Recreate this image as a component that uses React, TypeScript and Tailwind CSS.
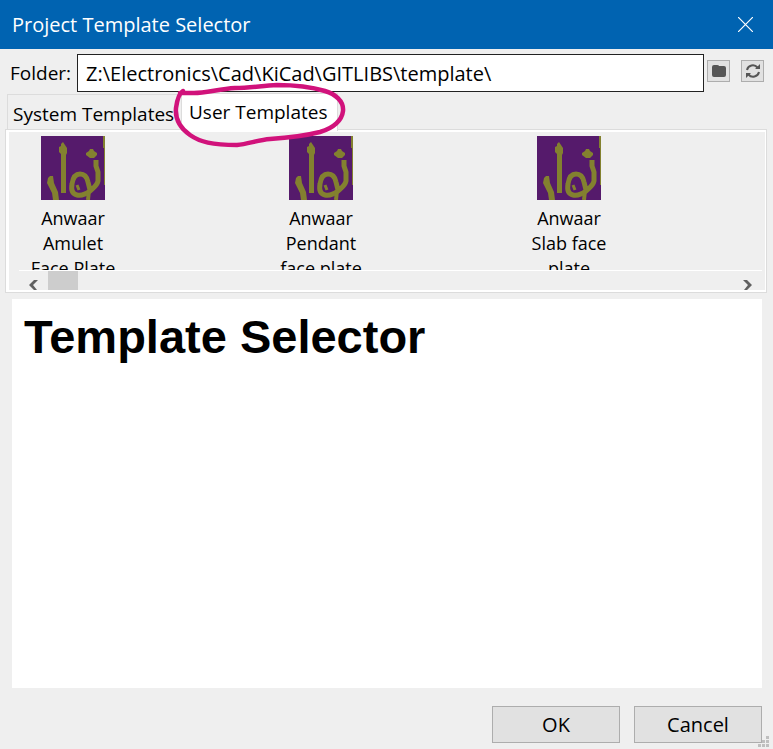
import React, { useState } from "react";

interface Template {
  id: string;
  name: string;
}

const templates: Template[] = [
  { id: "amulet", name: "Anwaar Amulet Face Plate" },
  { id: "pendant", name: "Anwaar Pendant face plate" },
  { id: "slab", name: "Anwaar Slab face plate" },
];

const TemplateIcon = () => (
  <svg width="64" height="64" viewBox="0 0 64 64" className="block shrink-0" aria-hidden="true">
    <rect width="64" height="64" fill="#551a6b" />
    <g fill="#83812f">
      <path d="M20 8 L22 6 L24 9 L26 12 V17 L25 19 V57 H20 V18 L18 16 V11 L20 10 Z" />
      <path d="M7 42 L9 40 H12 L13 47 L17 56 L18 64 H12 L11 57 L8 51 L6 47 Z" />
      <path d="M49 13 H52 L53 15 L56 17 V19 L53 22 H49 L45 19 V17 L48 15 Z" />
      <path d="M62 0 H64 V49 H63 V12 H62 Z" />
    </g>
    <g fill="none" stroke="#83812f" strokeWidth="5" strokeLinejoin="round">
      <path d="M55 24 V30 L57 36 V45 C56 50 52 52 49 55 C45 58 40 60 36 59 C31 58 30 54 31 48 C32 41 35 38 39 38 C44 38 46 41 47 46 L49 54" />
      <path d="M48 54 L47 64" strokeWidth="4" />
      <path d="M36 49 L38 54" strokeWidth="3" />
    </g>
  </svg>
);

const FolderIcon = () => (
  <svg width="14" height="12" viewBox="0 0 14 12" fill="#555" aria-hidden="true">
    <path d="M0 2 Q0 0 2 0 H5 Q7 0 7 1 H12 Q14 1 14 3 V10 Q14 12 12 12 H2 Q0 12 0 10 Z" />
  </svg>
);

const RefreshIcon = () => (
  <svg width="14" height="14" viewBox="0 0 14 14" aria-hidden="true">
    <g fill="none" stroke="#555" strokeWidth="2">
      <path d="M1 6 A6 6 0 0 1 11.5 3.5" />
      <path d="M13 8 A6 6 0 0 1 2.5 10.5" />
    </g>
    <path d="M14 0 V5 H9 Z M0 14 V9 H5 Z" fill="#555" />
  </svg>
);

// Hand-drawn ring around the user tab
const Highlight = () => (
  <svg
    width="180"
    height="72"
    viewBox="169 81 180 72"
    className="pointer-events-none absolute -left-3 -top-3 z-20"
    fill="none"
    stroke="#d1127b"
    strokeWidth="4.5"
    strokeLinecap="round"
    strokeLinejoin="round"
    aria-hidden="true"
  >
    <path d="M183 91 C179 93 177 101 176 108 C175 119 180 128 190 135 C200 142 212 145 237 145 C248 144 258 140 270 139 C285 138 300 137 320 132 C334 128 342 120 343 111 C344 101 335 94 325 91 C308 86 290 85 277 85 C260 86 250 88 235 88 C219 89 206 93 194 93 L180 93" />
  </svg>
);

const iconButton =
  "flex h-[22px] w-[23px] shrink-0 items-center justify-center border border-[#adadad] bg-[#e1e1e1]";
const dialogButton =
  "h-[37px] w-32 border border-[#adadad] bg-[#e1e1e1] text-center text-xl leading-6";

const App = () => {
  const [folder, setFolder] = useState("Z:\\Electronics\\Cad\\KiCad\\GITLIBS\\template\\");
  const [selected, setSelected] = useState("");

  return (
    <div className="flex min-h-screen flex-col bg-[#efefef] font-['Open_Sans','Noto_Sans',sans-serif] text-xl text-black">
      <header className="flex h-[49px] items-center justify-between bg-[#0063b1] pl-3 pr-5 text-white">
        <h1 className="text-xl">Project Template Selector</h1>
        <button type="button" aria-label="Close">
          <svg width="15" height="15" viewBox="0 0 15 15" stroke="#fff" strokeWidth="1.2" aria-hidden="true">
            <path d="M0 0 L15 15 M15 0 L0 15" />
          </svg>
        </button>
      </header>

      <div className="flex pl-[10px] pr-[9px] pt-[5px]">
        <label htmlFor="folder" className="w-[67px] shrink-0 self-center whitespace-nowrap text-[19px]">
          Folder:
        </label>
        <input
          id="folder"
          value={folder}
          onChange={(e) => setFolder(e.target.value)}
          className="h-[38px] min-w-0 flex-1 border border-[#222] bg-white px-2 outline-none"
        />
        <button type="button" aria-label="Browse" className={`${iconButton} ml-[3px] mt-[6px]`}>
          <FolderIcon />
        </button>
        <button type="button" aria-label="Refresh" className={`${iconButton} ml-[11px] mt-[6px]`}>
          <RefreshIcon />
        </button>
      </div>

      <div role="tablist" className="flex items-end pl-[7px] pt-[1px] text-[19px] leading-7">
        <button
          type="button"
          role="tab"
          aria-selected="false"
          className="h-[35px] w-[174px] whitespace-nowrap border-l border-t border-[#dcdcdc] pl-[5px] pt-1 text-left"
        >
          System Templates
        </button>
        <div className="relative z-10 -mb-[2px]">
          <button
            type="button"
            role="tab"
            aria-selected="true"
            className="block h-[38px] w-[157px] whitespace-nowrap border-x border-t border-[#dcdcdc] bg-white pb-[2px] pl-[7px] text-left"
          >
            User Templates
          </button>
          <Highlight />
        </div>
      </div>

      <section role="tabpanel" className="ml-[5px] mr-[6px] border border-[#dcdcdc]">
        <div className="border-y-2 border-l-[3px] border-r border-white">
          <ul className="flex h-[138px] gap-[152px] overflow-hidden pl-4 pt-1">
            {templates.map((template) => (
              <li key={template.id} className="w-24 shrink-0">
                <button
                  type="button"
                  aria-pressed={selected === template.id}
                  onClick={() => setSelected(template.id)}
                  className="flex w-full flex-col items-center gap-[6px] text-lg leading-[25px]"
                >
                  <TemplateIcon />
                  <span>{template.name}</span>
                </button>
              </li>
            ))}
          </ul>
          <div className="ml-[10px] mr-[3px] flex h-5 items-end border-t border-white">
            <button type="button" aria-label="Scroll left" className="ml-[10px]">
              <svg width="9" height="10" viewBox="0 0 9 10" className="block" fill="#606060" aria-hidden="true">
                <path d="M5 0 H9 L4 5 L8 10 H5 L0 5 Z" />
              </svg>
            </button>
            <div className="ml-[10px] h-full w-[30px] bg-[#cdcdcd]" />
            <button type="button" aria-label="Scroll right" className="ml-auto mr-[10px]">
              <svg width="9" height="10" viewBox="0 0 9 10" className="block" fill="#606060" aria-hidden="true">
                <path d="M4 0 H0 L5 5 L1 10 H4 L9 5 Z" />
              </svg>
            </button>
          </div>
        </div>
      </section>

      <main className="ml-3 mr-[11px] mt-[6px] flex-1 bg-white px-3 pt-[10px]">
        <h2 className="font-['Liberation_Sans',Arial,sans-serif] text-[47px] font-bold leading-[56px]">
          Template Selector
        </h2>
      </main>

      <footer className="relative flex justify-end gap-[14px] pb-[6px] pr-[11px] pt-[18px]">
        <button type="button" className={dialogButton}>
          OK
        </button>
        <button type="button" className={dialogButton}>
          Cancel
        </button>
        <svg width="11" height="11" viewBox="0 0 11 11" className="absolute bottom-[2px] right-1" fill="#bfbfbf" aria-hidden="true">
          <path d="M8 0h3v3H8z M4 4h3v3H4z M8 4h3v3H8z M0 8h3v3H0z M4 8h3v3H4z M8 8h3v3H8z" />
        </svg>
      </footer>
    </div>
  );
};

export default App;
